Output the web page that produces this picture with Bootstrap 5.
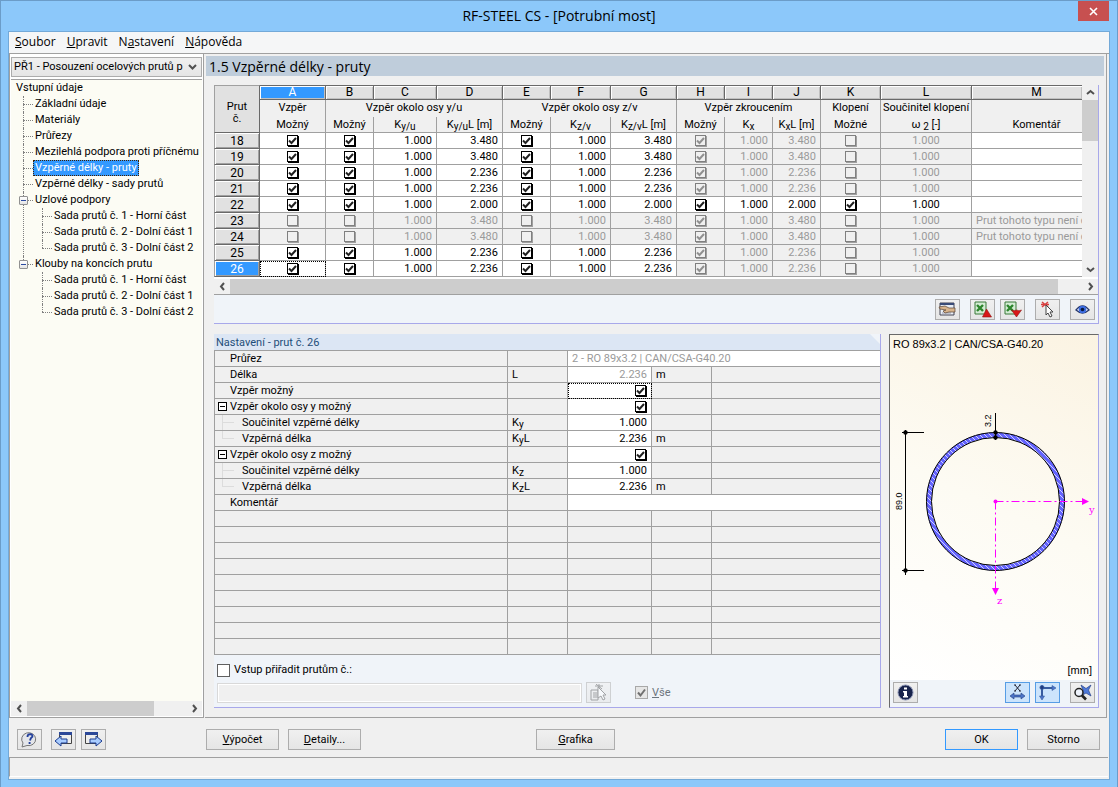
<!DOCTYPE html>
<html lang="cs">
<head>
<meta charset="utf-8">
<meta name="viewport" content="width=device-width, initial-scale=1">
<title>RF-STEEL CS - [Potrubní most]</title>
<link href="https://cdn.jsdelivr.net/npm/bootstrap@5.3.0/dist/css/bootstrap.min.css" rel="stylesheet">
<style>
:root { --face:#f0f0f0; --line:#a0a0a0; --dark:#696969; --sel:#3399ff; --edge:#a8a8ea; --strip:#f0f4f9; }
body { background:#8cc8fa; border:1px solid #6b9cc8; min-height:100vh; font:11px/16px Roboto,"Liberation Sans",Arial,sans-serif; color:#000; }
.ui-font { font-family:"Open Sans","Noto Sans",sans-serif; }
.titlebar { height:30px; font-size:14px; line-height:30px; }
.close-btn { top:0; right:8px; width:31px; height:20px; background:#c75050; border:0; }
.client { margin:0 7px 7px; background:var(--face); border:1px solid #73a9d8; }
.menubar { height:21px; background:#f5f6f7; font-size:12px; line-height:19px; padding-left:6px; gap:11px; }
.menubar a { color:#000; text-decoration:none; }
.panes { border-top:1px solid var(--line); gap:1px; padding-right:2px; }
.side { width:195px; flex:none; border:1px solid var(--line); border-top:0; padding:3px 1px 1px; background:#fff; }
.case-select { height:20px; border:1px solid #acacac; border-radius:0; font-size:11px; line-height:16px; padding:0 14px 0 2px; color:#000;
  background:url("data:image/svg+xml,%3Csvg xmlns='http://www.w3.org/2000/svg' viewBox='0 0 9 6'%3E%3Cpath d='M1 1l3.500 3.500L8 1' fill='none' stroke='%23505050' stroke-width='2'/%3E%3C/svg%3E") right 4px center/9px 6px no-repeat, linear-gradient(#f0f0f0,#e5e5e5); }
.tree { background:#fcfcf4; border-top:1px solid var(--line); margin-top:2px; padding:0 0 0 5px; overflow:hidden; }
.tree ul { list-style:none; margin:0 0 0 7px; padding:0; }
.tree li { position:relative; padding-left:12px; white-space:nowrap; }
.tree li::before { content:""; position:absolute; left:0; top:0; bottom:0; border-left:1px dotted #808080; }
.tree li:last-child::before { bottom:auto; height:8px; }
.tree li::after { content:""; position:absolute; left:0; top:8px; width:10px; border-top:1px dotted #808080; }
.tree a { display:inline-block; height:16px; line-height:16px; color:#000; text-decoration:none; vertical-align:top; }
.tree a.current { background:var(--sel); color:#fff; outline:1px dotted #402000; outline-offset:-1px; margin-left:-2px; padding:0 2px; }
.fold { position:absolute; z-index:1; left:-4px; top:4px; width:9px; height:9px; border:1px solid #919191; background:linear-gradient(#fff,#e4e4e4); padding:0; border-radius:1px; }
.fold::after, .fold-sq::after { content:""; position:absolute; left:1px; right:1px; top:3px; height:1px; background:#2a4aa0; }
.scroll-bar { background:var(--face); flex:none; }
.scroll-bar button { border:0; background:none; padding:0; width:16px; height:15px; display:flex; align-items:center; justify-content:center; flex:none; }
.scroll-bar svg { width:9px; height:9px; fill:none; stroke:#505050; stroke-width:2; }
.thumb { background:#cdcdcd; }
.side .thumb { flex:4; }
.main { border-right:1px solid var(--line); border-bottom:1px solid var(--line); padding:2px 2px 9px 1px; min-width:0; }
.page-title { background:#bfcddb; font-size:14px; line-height:22px; height:20px; margin:0; padding-left:3px; font-weight:400; }
.inner { padding:9px 5px 0 8px; }
.upper { border-right:1px solid var(--edge); border-bottom:1px solid var(--edge); background:var(--strip); }
table { border-collapse:separate; border-spacing:0; table-layout:fixed; width:100%; }
.data-grid th, .data-grid td { border-right:1px solid var(--line); border-bottom:1px solid var(--line); padding:0; height:16px; line-height:15px; font-weight:400; text-align:center; overflow:hidden; white-space:nowrap; background:var(--face); }
.data-grid thead th { vertical-align:top; }
.data-grid .letters th { height:15px; line-height:13px; font-size:12px; background:#e1e1e1; border-top:1px solid var(--dark); border-right:1px solid var(--dark); border-bottom:1px solid var(--dark); box-shadow:inset 1px 1px #fff, inset -1px -1px #c0c0c0; }
.data-grid .letters .corner { font-size:11px; border:1px solid var(--line); border-right-color:var(--dark); border-bottom-color:var(--dark); line-height:12px; box-shadow:none; padding-top:15px; }
.data-grid .letters .picked, .data-grid .picked th { background:var(--sel); color:#fff; }
.data-grid .groups th { height:17px; border-bottom:0; }
.data-grid tr > :last-child, .data-grid .letters > :last-child { border-right:0; }
.data-grid thead tr > :last-child { padding-left:19px; }
.data-grid tbody th { background:#e1e1e1; border:1px solid var(--dark); border-top:0; border-left-color:var(--line); line-height:14px; font-size:12px; box-shadow:inset 1px 1px #fff, inset -1px -1px #a0a0a0; }
.data-grid tbody td { background:#fff; }
.data-grid tbody td.num { text-align:right; padding-right:4px; }
.data-grid tbody td.off { background:var(--face); color:#9a9a9a; }
.data-grid tbody td.note { text-align:left; padding-left:4px; }
.data-grid td.focused, .props td.focused { outline:1px dotted #000; outline-offset:-1px; }
sub { font-size:10px; line-height:0; bottom:-2px; }
.tick { appearance:none; width:11px; height:11px; display:block; background:#fff; border:1px solid #000; box-shadow:1px 1px #000; }
.data-grid .tick { margin:0 auto; }
.tick:checked { background:#fff url("data:image/svg+xml,%3Csvg xmlns='http://www.w3.org/2000/svg' viewBox='0 0 9 9'%3E%3Cpath d='M1 4.500l2.500 2.500L8 2' fill='none' stroke='%23202020' stroke-width='2'/%3E%3C/svg%3E") center/9px 9px no-repeat; }
.tick:disabled { border-color:#808080; box-shadow:1px 1px #a0a0a0; background-color:var(--face); }
.tick:disabled:checked { background-image:url("data:image/svg+xml,%3Csvg xmlns='http://www.w3.org/2000/svg' viewBox='0 0 9 9'%3E%3Cpath d='M1 4.500l2.500 2.500L8 2' fill='none' stroke='%23909090' stroke-width='2'/%3E%3C/svg%3E"); }
.v-scroll { width:16px; }
.v-scroll .thumb { height:41px; }
.h-scroll { height:18px; border-top:2px solid #fff; border-bottom:1px solid var(--line); }
.tool-strip { height:28px; padding:4px 3px 0; gap:5px; }
.tool-btn { width:25px; height:21px; border:1px solid #adadad; border-radius:0; padding:0; background:linear-gradient(#f0f0f0,#e5e5e5); display:flex; align-items:center; justify-content:center; flex:none; }
.tool-btn.set-apart { margin-right:5px; }
.tool-btn.lit { background:#cce4fc; border-color:#569de5; }
.tool-btn svg { width:19px; height:17px; }
.lower { margin-top:10px; gap:8px; }
.props-pane { min-width:0; border-right:1px solid var(--edge); border-bottom:1px solid var(--edge); background:var(--strip); }
.props-pane h2 { font-size:11px; line-height:17px; height:16px; margin:0; padding-left:2px; background:#dce6f4; color:#1f4e79; font-weight:400; clip-path:polygon(0 0,calc(100% - 10px) 0,100% 10px,100% 100%,0 100%); }
.props { border-top:1px solid var(--line); border-left:1px solid var(--line); background:var(--face); }
.props td, .props th { height:16px; line-height:15px; padding:0 4px; border-right:1px solid var(--line); border-bottom:1px solid var(--line); white-space:nowrap; font-weight:400; overflow:hidden; }
.props tr > :last-child { border-right:0; }
.props .lead-cell { padding-left:15px; position:relative; }
.props .lead-cell.child-cell { padding-left:27px; }
.child-cell::before { content:""; position:absolute; left:7px; top:0; height:8px; width:12px; border-left:1px solid #dcdcdc; border-bottom:1px solid #dcdcdc; }
.child-cell.more-cell::after { content:""; position:absolute; left:7px; top:0; bottom:0; border-left:1px solid #dcdcdc; }
.fold-sq { position:absolute; left:3px; top:3px; width:9px; height:9px; border:1px solid #000; background:#fff; padding:0; }
.fold-sq::after { background:#000; }
.props .val { background:#fff; text-align:right; }
.props .val .tick { margin:0 1px 0 auto; }
.props .dim { color:#9a9a9a; }
.assign { padding:7px 3px 4px; gap:4px; }
.flat-check { appearance:none; width:13px; height:13px; border:1px solid #606060; background:#fff; margin:0; flex:none; }
.flat-check:disabled:checked { border-color:#a8a8a8; background:#e6e6e6 url("data:image/svg+xml,%3Csvg xmlns='http://www.w3.org/2000/svg' viewBox='0 0 11 11'%3E%3Cpath d='M2 5.500l2.500 3L9 2.500' fill='none' stroke='%23707070' stroke-width='2'/%3E%3C/svg%3E") center/11px 11px no-repeat; }
.list-input { height:20px; width:365px; min-width:0; border:1px solid #d9d9d9; box-shadow:inset 0 0 0 1px #fff; background:var(--face); }
.sketch-pane { width:210px; flex:none; border:1px solid var(--edge); border-top-color:var(--dark); border-left-color:var(--dark); background:var(--strip); }
.sketch { background:linear-gradient(205deg,#fbf3e2 0,#fdfbf3 50%,#fff 100%); padding:1px 6px 2px 3px; font-family:"Liberation Sans",Arial,sans-serif; }
.sketch svg { margin:-17px -6px 0 -3px; height:300px; display:block; flex:none; }
.sketch-tools { height:27px; padding:2px 3px 0; gap:5px; }
.actions { height:39px; padding:11px 9px 0 8px; gap:5px; }
.push-btn { width:73px; height:21px; padding:0; border:1px solid #adadad; background:linear-gradient(#f0f0f0,#e5e5e5); line-height:19px; color:#000; flex:none; }
.push-btn.wide-btn { width:79px; margin:0 auto 0 166px; }
.push-btn.default-btn { border-color:#3399ff; }
.calc-group { margin-left:95px; gap:9px; }
.status { height:20px; margin:0 1px 2px 0; border-top:1px solid var(--line); border-left:1px solid var(--line); border-bottom:1px solid #fff; }
</style>
</head>
<body class="d-flex flex-column m-0">
<header class="titlebar ui-font position-relative text-center">RF-STEEL CS - [Potrubní most]
  <button class="close-btn position-absolute d-flex align-items-center justify-content-center p-0" aria-label="Zavřít"><svg width="9" height="9" viewBox="0 0 9 9" stroke="#fff" stroke-width="1.600"><path d="M1 1l7 7M8 1L1 8"/></svg></button>
</header>
<div class="client d-flex flex-column flex-grow-1">
  <nav class="menubar ui-font d-flex">
    <a href="#"><u>S</u>oubor</a><a href="#"><u>U</u>pravit</a><a href="#">N<u>a</u>stavení</a><a href="#"><u>N</u>ápověda</a>
  </nav>
  <div class="panes d-flex flex-grow-1">
    <aside class="side d-flex flex-column">
      <select class="case-select form-select" aria-label="Případ"><option>PŘ1 - Posouzení ocelových prutů p</option></select>
      <div class="tree flex-grow-1">
        <a href="#">Vstupní údaje</a>
        <ul>
          <li><a href="#">Základní údaje</a></li>
          <li><a href="#">Materiály</a></li>
          <li><a href="#">Průřezy</a></li>
          <li><a href="#">Mezilehlá podpora proti příčnému p</a></li>
          <li><a href="#" class="current">Vzpěrné délky - pruty</a></li>
          <li><a href="#">Vzpěrné délky - sady prutů</a></li>
          <li><button class="fold" aria-label="Sbalit"></button><a href="#">Uzlové podpory</a>
            <ul><li><a href="#">Sada prutů č. 1 - Horní část</a></li><li><a href="#">Sada prutů č. 2 - Dolní část 1</a></li><li><a href="#">Sada prutů č. 3 - Dolní část 2</a></li></ul></li>
          <li><button class="fold" aria-label="Sbalit"></button><a href="#">Klouby na koncích prutu</a>
            <ul><li><a href="#">Sada prutů č. 1 - Horní část</a></li><li><a href="#">Sada prutů č. 2 - Dolní část 1</a></li><li><a href="#">Sada prutů č. 3 - Dolní část 2</a></li></ul></li>
        </ul>
      </div>
      <div class="scroll-bar d-flex">
        <button aria-label="Doleva"><svg viewBox="0 0 9 9"><path d="M6 1L3 4.500 6 8"/></svg></button>
        <div class="thumb"></div><div class="flex-fill"></div>
        <button aria-label="Doprava"><svg viewBox="0 0 9 9"><path d="M3 1l3 3.500L3 8"/></svg></button>
      </div>
    </aside>
    <main class="main flex-grow-1 d-flex flex-column">
      <h1 class="page-title ui-font">1.5 Vzpěrné délky - pruty</h1>
      <div class="inner flex-grow-1 d-flex flex-column">
        <section class="upper">
          <div class="d-flex">
            <div class="flex-grow-1 overflow-hidden">
              <table class="data-grid">
                <colgroup id="gridCols"></colgroup>
                <thead>
                  <tr class="letters"><th rowspan="3" class="corner">Prut<br>č.</th><th class="picked">A</th><th>B</th><th>C</th><th>D</th><th>E</th><th>F</th><th>G</th><th>H</th><th>I</th><th>J</th><th>K</th><th>L</th><th>M</th></tr>
                  <tr class="groups"><th>Vzpěr</th><th colspan="3">Vzpěr okolo osy y/u</th><th colspan="3">Vzpěr okolo osy z/v</th><th colspan="3">Vzpěr zkroucením</th><th>Klopení</th><th>Součinitel klopení</th><th></th></tr>
                  <tr><th>Možný</th><th>Možný</th><th>K<sub>y/u</sub></th><th>K<sub>y/u</sub>L [m]</th><th>Možný</th><th>K<sub>z/v</sub></th><th>K<sub>z/v</sub>L [m]</th><th>Možný</th><th>K<sub>x</sub></th><th>K<sub>x</sub>L [m]</th><th>Možné</th><th>ω<sub> 2</sub> [-]</th><th>Komentář</th></tr>
                </thead>
                <tbody id="gridRows"></tbody>
              </table>
            </div>
            <div class="scroll-bar v-scroll d-flex flex-column">
              <button aria-label="Nahoru"><svg viewBox="0 0 9 9"><path d="M1 6l3.500-3L8 6"/></svg></button>
              <div class="thumb"></div><div class="flex-grow-1"></div>
              <button aria-label="Dolů"><svg viewBox="0 0 9 9"><path d="M1 3l3.500 3L8 3"/></svg></button>
            </div>
          </div>
          <div class="scroll-bar h-scroll d-flex">
            <button aria-label="Doleva"><svg viewBox="0 0 9 9"><path d="M6 1L3 4.500 6 8"/></svg></button>
            <div class="thumb flex-grow-1 me-4"></div>
            <button aria-label="Doprava"><svg viewBox="0 0 9 9"><path d="M3 1l3 3.500L3 8"/></svg></button>
          </div>
          <div class="tool-strip d-flex justify-content-end">
            <button class="tool-btn set-apart" aria-label="Vybrat"><svg viewBox="0 0 19 17"><path d="M2 2h14v12H2z" fill="#e8eef6" stroke="#445"/><path d="M2 2h14v2H2z" fill="#3a4c78"/><path d="M4 12h9" stroke="#99a"/><path d="M1 6l6-1 4 2h6v4h-6l-4 1-2-2 3-1-6-1z" fill="#d8b48c" stroke="#5a4430" stroke-width=".7"/></svg></button>
            <button class="tool-btn" aria-label="Export do Excelu"><svg viewBox="0 0 19 17"><path d="M2 1h11v12H2z" fill="#d4ecd4" stroke="#3a7a3a"/><path d="M4 4l6 6M10 4l-6 6" stroke="#2c852c" stroke-width="2.400"/><path d="M13.500 8l5 8h-9z" fill="#d81818" stroke="#901010" stroke-width=".6"/></svg></button>
            <button class="tool-btn set-apart" aria-label="Import z Excelu"><svg viewBox="0 0 19 17"><path d="M2 1h11v12H2z" fill="#d4ecd4" stroke="#3a7a3a"/><path d="M4 4l6 6M10 4l-6 6" stroke="#2c852c" stroke-width="2.400"/><path d="M8.500 9q2.500 1.500 5 0 2.500 1.500 5 0l-5 7z" fill="#d81818" stroke="#901010" stroke-width=".6"/></svg></button>
            <button class="tool-btn set-apart" aria-label="Vybrat v grafice"><svg viewBox="0 0 19 17"><path d="M4 1l6 5M10 1L4 6M3 3.500h8" stroke="#d84040" stroke-width="1.500"/><path d="M8 4l7 7h-3l2 4-2 1-2-4-2 2z" fill="#fff" stroke="#444"/></svg></button>
            <button class="tool-btn" aria-label="Zobrazit"><svg viewBox="0 0 19 17"><path d="M3 9q6.500-8 13 0-6.500 6-13 0z" fill="#e8eeff" stroke="#27376b" stroke-width="1.300"/><circle cx="9.500" cy="8.500" r="3.800" fill="#3c6ce0"/><circle cx="9.500" cy="8.500" r="1.800" fill="#081840"/></svg></button>
          </div>
        </section>
        <div class="lower d-flex flex-grow-1">
          <section class="props-pane flex-grow-1 d-flex flex-column">
            <h2>Nastavení - prut č. 26</h2>
            <table class="props">
              <colgroup><col><col style="width:60px"><col style="width:84px"><col style="width:60px"><col style="width:168px"></colgroup>
              <tbody id="propRows">
                <tr><th class="lead-cell">Průřez</th><td></td><td colspan="3" class="val dim text-start">2 - RO 89x3.2 | CAN/CSA-G40.20</td></tr>
                <tr><th class="lead-cell">Délka</th><td>L</td><td class="val dim">2.236</td><td>m</td><td></td></tr>
                <tr><th class="lead-cell">Vzpěr možný</th><td></td><td class="val focused"><input type="checkbox" class="tick" checked aria-label="Vzpěr možný"></td><td></td><td></td></tr>
                <tr><th class="lead-cell"><button class="fold-sq" aria-label="Sbalit"></button>Vzpěr okolo osy y možný</th><td></td><td class="val"><input type="checkbox" class="tick" checked aria-label="Vzpěr okolo osy y možný"></td><td></td><td></td></tr>
                <tr><th class="lead-cell child-cell more-cell">Součinitel vzpěrné délky</th><td>K<sub>y</sub></td><td class="val">1.000</td><td></td><td></td></tr>
                <tr><th class="lead-cell child-cell">Vzpěrná délka</th><td>K<sub>y</sub>L</td><td class="val">2.236</td><td>m</td><td></td></tr>
                <tr><th class="lead-cell"><button class="fold-sq" aria-label="Sbalit"></button>Vzpěr okolo osy z možný</th><td></td><td class="val"><input type="checkbox" class="tick" checked aria-label="Vzpěr okolo osy z možný"></td><td></td><td></td></tr>
                <tr><th class="lead-cell child-cell more-cell">Součinitel vzpěrné délky</th><td>K<sub>z</sub></td><td class="val">1.000</td><td></td><td></td></tr>
                <tr><th class="lead-cell child-cell">Vzpěrná délka</th><td>K<sub>z</sub>L</td><td class="val">2.236</td><td>m</td><td></td></tr>
                <tr><th class="lead-cell">Komentář</th><td></td><td colspan="3" class="val"></td></tr>
              </tbody>
            </table>
            <div class="assign d-flex flex-column">
              <div class="d-flex align-items-center gap-1"><input type="checkbox" class="flat-check" id="assign"><label for="assign">Vstup přiřadit prutům č.:</label></div>
              <div class="d-flex align-items-center gap-1">
                <input type="text" class="list-input" disabled aria-label="Čísla prutů">
                <button class="tool-btn opacity-50 me-3" disabled aria-label="Vybrat pruty"><svg viewBox="0 0 19 17" fill="none" stroke="#555"><path d="M2 6h7v10H2zM4 9h4M4 11h4M4 13h4M6 2h8M10 0v5M7 0l6 5"/><path d="M9 3l8 8h-3l2 4-2 1-2-4-3 2z" fill="#fff"/></svg></button>
                <input type="checkbox" class="flat-check ms-1" id="all" checked disabled><label for="all" class="text-secondary"><u>V</u>še</label>
              </div>
            </div>
          </section>
          <section class="sketch-pane d-flex flex-column">
            <div class="sketch flex-grow-1 d-flex flex-column">
              <div class="position-relative">RO 89x3.2 | CAN/CSA-G40.20</div>
              <svg viewBox="0 0 208 300" aria-label="Průřez trubky">
                <defs><pattern id="hatch" width="5" height="5" patternUnits="userSpaceOnUse"><path d="M0 0h5v5H0z" fill="#6464ff"/><path d="M-1-1l7 7" stroke="#dcdcff" stroke-width=".9"/></pattern></defs>
                <circle cx="105.500" cy="166.500" r="66.500" fill="none" stroke="url(#hatch)" stroke-width="5"/>
                <g fill="none" stroke="#000"><circle cx="105.500" cy="166.500" r="69"/><circle cx="105.500" cy="166.500" r="64"/>
                <path d="M15.500 95v145M12 97.500h22M12 235.500h22M105.500 78v27"/></g>
                <g><circle cx="15.500" cy="97.500" r="2.200"/><circle cx="15.500" cy="235.500" r="2.200"/><circle cx="105.500" cy="97.500" r="2.200"/><circle cx="105.500" cy="102.500" r="2.200"/></g>
                <g stroke="#f0f" fill="none" stroke-dasharray="8 3 2 3"><path d="M105.500 166.500H193M105.500 166.500V255"/></g>
                <g fill="#f0f" font-family="DejaVu Serif" font-size="10"><circle cx="105.500" cy="166.500" r="2"/><path d="M192 163l7 3.500-7 3.500zM102 253h7l-3.500 7z"/>
                <text x="199" y="178">y</text><text x="107" y="269">z</text></g>
                <g font-family="Liberation Sans" font-size="9"><text transform="translate(12 175) rotate(-90)">89.0</text><text transform="translate(101 92) rotate(-90)">3.2</text></g>
              </svg>
              <div class="text-end mt-auto">[mm]</div>
            </div>
            <div class="sketch-tools d-flex">
              <button class="tool-btn me-auto" aria-label="Informace"><svg viewBox="0 0 19 17"><circle cx="9.500" cy="8.500" r="7.500" fill="#18234c" stroke="#8a93b4"/><path d="M8 3.500h3v2H8zM7 7h4v5h1v1.500H7V12h1V8.500H7z" fill="#fff"/></svg></button>
              <button class="tool-btn lit" aria-label="Kóty"><svg viewBox="0 0 19 17"><path d="M7 1l5 6M12 1L7 7M6 1h2M11 1h2M6 7h2M11 7h2" stroke="#223" fill="none"/><path d="M2 12l4-3v2h7V9l4 3-4 3v-2H6v2z" fill="#4c74c8" stroke="#203c80" stroke-width=".6"/></svg></button>
              <button class="tool-btn lit set-apart" aria-label="Osy"><svg viewBox="0 0 19 17" stroke="#385ca0" fill="#4c74c8"><path d="M4 13V4h11" fill="none" stroke-width="2"/><path d="M14 1.500l4 2.500-4 2.500zM1.500 12h5L4 16z" stroke-width=".6"/><circle cx="4" cy="3.500" r="2" fill="#203c80"/></svg></button>
              <button class="tool-btn" aria-label="Zobrazit vše"><svg viewBox="0 0 19 17"><path d="M8 1l5 3.500L18 1l-2.500 5L18 12l-5-3-5 3 2-6z" fill="#4c78d8" stroke="#28448c" stroke-width=".7"/><circle cx="6" cy="8.500" r="4" fill="#eef4ff" fill-opacity=".8" stroke="#222" stroke-width="1.500"/><path d="M9 11.500l4 4" stroke="#222" stroke-width="2.600"/></svg></button>
            </div>
          </section>
        </div>
      </div>
    </main>
  </div>
  <footer>
    <div class="actions d-flex">
      <button class="tool-btn me-1" aria-label="Nápověda"><svg viewBox="0 0 19 17"><path d="M3 12a7 6.500 0 1 1 4 2.500L2 16z" fill="#e4e6ea" stroke="#777"/><path d="M7.500 6q0-3 3-2.800 2.500.3 1.800 2.600Q10.500 7 10 9.500M9.600 11v2" fill="none" stroke="#24409c" stroke-width="1.900"/></svg></button>
      <button class="tool-btn" aria-label="Předchozí"><svg viewBox="0 0 19 17"><path d="M5.500 1.500h12v11h-12z" fill="#eee" stroke="#444"/><path d="M5 1h13v3H5z" fill="#2c4898"/><path d="M1 10l6-5v3h6v4H7v3z" fill="#a8ccff" stroke="#1c3c90"/></svg></button>
      <button class="tool-btn" aria-label="Další"><svg viewBox="0 0 19 17"><path d="M1.500 1.500h12v11h-12z" fill="#eee" stroke="#444"/><path d="M1 1h13v3H1z" fill="#2c4898"/><path d="M18 10l-6-5v3H6v4h6v3z" fill="#a8ccff" stroke="#1c3c90"/></svg></button>
      <div class="calc-group d-flex flex-grow-1">
        <button class="push-btn"><u>V</u>ýpočet</button><button class="push-btn"><u>D</u>etaily...</button>
        <button class="push-btn wide-btn"><u>G</u>rafika</button>
        <button class="push-btn default-btn">OK</button><button class="push-btn">Storno</button>
      </div>
    </div>
    <div class="status"></div>
  </footer>
</div>
<script>
const widths = [46, 66, 48, 63, 66, 48, 60, 66, 48, 48, 48, 60, 91, 0];
gridCols.innerHTML = widths.map(w => w ? `<col style="width:${w}px">` : '<col>').join('');
const lengths = { 18:'3.480', 19:'3.480', 20:'2.236', 21:'2.236', 22:'2.000', 23:'3.480', 24:'3.480', 25:'2.236', 26:'2.236' };
for (const [id, len] of Object.entries(lengths)) {
  const invalid = id === '23' || id === '24', torsion = id === '22', last = id === '26';
  const box = (name, on, off, focus) => `<td class="${off ? 'off' : ''}${focus ? ' focused' : ''}"><input type="checkbox" class="tick" aria-label="${name} ${id}"${on ? ' checked' : ''}${off ? ' disabled' : ''}></td>`;
  const num = (v, off, cls = 'num') => `<td class="${cls}${off ? ' off' : ''}">${v}</td>`;
  gridRows.insertAdjacentHTML('beforeend', `<tr${last ? ' class="picked"' : ''}><th>${id}</th>` +
    box('Vzpěr', !invalid, invalid, last) +
    box('Vzpěr y/u', !invalid, invalid) + num('1.000', invalid) + num(len, invalid) +
    box('Vzpěr z/v', !invalid, invalid) + num('1.000', invalid) + num(len, invalid) +
    box('Zkroucení', true, !torsion) + num('1.000', !torsion) + num(len, !torsion) +
    box('Klopení', torsion, !torsion) + num('1.000', !torsion, 'mid') +
    `<td class="note${invalid ? ' off' : ''}">${invalid ? 'Prut tohoto typu není c' : ''}</td></tr>`);
}
for (let i = 0; i < 9; i++) propRows.insertAdjacentHTML('beforeend', '<tr><td></td><td></td><td></td><td></td><td></td></tr>');
</script>
<script src="https://cdn.jsdelivr.net/npm/bootstrap@5.3.0/dist/js/bootstrap.bundle.min.js"></script>
</body>
</html>
